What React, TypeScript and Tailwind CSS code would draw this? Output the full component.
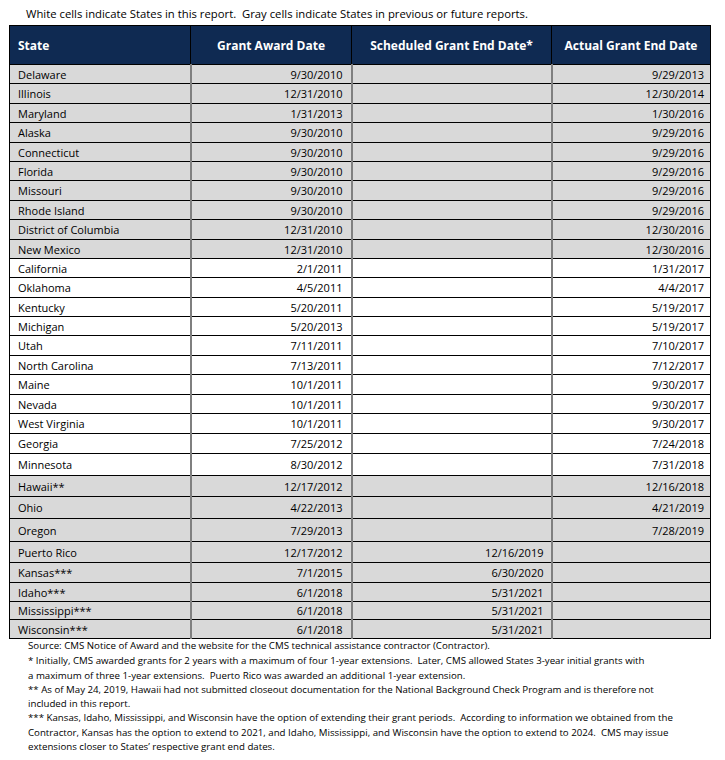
const rows: { state: string; award: string; scheduled: string; actual: string; gray: boolean; h: string }[] = [
  { state: 'Delaware', award: '9/30/2010', scheduled: '', actual: '9/29/2013', gray: true, h: 'h-[19px]' },
  { state: 'Illinois', award: '12/31/2010', scheduled: '', actual: '12/30/2014', gray: true, h: 'h-[20px]' },
  { state: 'Maryland', award: '1/31/2013', scheduled: '', actual: '1/30/2016', gray: true, h: 'h-[19px]' },
  { state: 'Alaska', award: '9/30/2010', scheduled: '', actual: '9/29/2016', gray: true, h: 'h-[20px]' },
  { state: 'Connecticut', award: '9/30/2010', scheduled: '', actual: '9/29/2016', gray: true, h: 'h-[19px]' },
  { state: 'Florida', award: '9/30/2010', scheduled: '', actual: '9/29/2016', gray: true, h: 'h-[19px]' },
  { state: 'Missouri', award: '9/30/2010', scheduled: '', actual: '9/29/2016', gray: true, h: 'h-[20px]' },
  { state: 'Rhode Island', award: '9/30/2010', scheduled: '', actual: '9/29/2016', gray: true, h: 'h-[19px]' },
  { state: 'District of Columbia', award: '12/31/2010', scheduled: '', actual: '12/30/2016', gray: true, h: 'h-[20px]' },
  { state: 'New Mexico', award: '12/31/2010', scheduled: '', actual: '12/30/2016', gray: true, h: 'h-[19px]' },
  { state: 'California', award: '2/1/2011', scheduled: '', actual: '1/31/2017', gray: false, h: 'h-[19px]' },
  { state: 'Oklahoma', award: '4/5/2011', scheduled: '', actual: '4/4/2017', gray: false, h: 'h-[20px]' },
  { state: 'Kentucky', award: '5/20/2011', scheduled: '', actual: '5/19/2017', gray: false, h: 'h-[19px]' },
  { state: 'Michigan', award: '5/20/2013', scheduled: '', actual: '5/19/2017', gray: false, h: 'h-[19px]' },
  { state: 'Utah', award: '7/11/2011', scheduled: '', actual: '7/10/2017', gray: false, h: 'h-[20px]' },
  { state: 'North Carolina', award: '7/13/2011', scheduled: '', actual: '7/12/2017', gray: false, h: 'h-[19px]' },
  { state: 'Maine', award: '10/1/2011', scheduled: '', actual: '9/30/2017', gray: false, h: 'h-[20px]' },
  { state: 'Nevada', award: '10/1/2011', scheduled: '', actual: '9/30/2017', gray: false, h: 'h-[19px]' },
  { state: 'West Virginia', award: '10/1/2011', scheduled: '', actual: '9/30/2017', gray: false, h: 'h-[20px]' },
  { state: 'Georgia', award: '7/25/2012', scheduled: '', actual: '7/24/2018', gray: false, h: 'h-[20px]' },
  { state: 'Minnesota', award: '8/30/2012', scheduled: '', actual: '7/31/2018', gray: false, h: 'h-[22px]' },
  { state: 'Hawaii**', award: '12/17/2012', scheduled: '', actual: '12/16/2018', gray: true, h: 'h-[21px]' },
  { state: 'Ohio', award: '4/22/2013', scheduled: '', actual: '4/21/2019', gray: true, h: 'h-[22px]' },
  { state: 'Oregon', award: '7/29/2013', scheduled: '', actual: '7/28/2019', gray: true, h: 'h-[23px]' },
  { state: 'Puerto Rico', award: '12/17/2012', scheduled: '12/16/2019', actual: '', gray: true, h: 'h-[21px]' },
  { state: 'Kansas***', award: '7/1/2015', scheduled: '6/30/2020', actual: '', gray: true, h: 'h-[20px]' },
  { state: 'Idaho***', award: '6/1/2018', scheduled: '5/31/2021', actual: '', gray: true, h: 'h-[19px]' },
  { state: 'Mississippi***', award: '6/1/2018', scheduled: '5/31/2021', actual: '', gray: true, h: 'h-[18px]' },
  { state: 'Wisconsin***', award: '6/1/2018', scheduled: '5/31/2021', actual: '', gray: true, h: 'h-[19px]' },
]

export default function App() {
  return (
    <div className="w-[725px] h-[760px] bg-white text-black pl-[9px] pt-[3px]" style={{ fontFamily: '"Open Sans", sans-serif' }}>
      {/* Caption */}
      <p className="pl-[17px] text-[11.3px] leading-[22px] h-[22px]">
        White cells indicate States in this report.&nbsp; Gray cells indicate States in previous or future reports.
      </p>

      {/* Table */}
      <table className="border-collapse table-fixed w-[701px] text-[11px] leading-[15px]">
        <colgroup>
          <col className="w-[181px]" />
          <col className="w-[161px]" />
          <col className="w-[200px]" />
          <col className="w-[159px]" />
        </colgroup>
        <thead>
          <tr className="bg-[#0f2a52] text-white text-[12px] font-bold">
            <th className="h-[39px] border border-black text-left pl-[8px]">State</th>
            <th className="h-[39px] border border-black text-center">Grant Award Date</th>
            <th className="h-[39px] border border-black text-center">Scheduled Grant End Date*</th>
            <th className="h-[39px] border border-black text-center">Actual Grant End Date</th>
          </tr>
        </thead>
        <tbody>
          {rows.map((r) => (
            <tr key={r.state} className={r.gray ? 'bg-[#d9d9d9]' : 'bg-white'}>
              <td className={`${r.h} p-0 pl-[8px] border-y border-black border-l border-l-black border-r-2 border-r-[#7f7f7f]`}>{r.state}</td>
              <td className={`${r.h} p-0 pr-[8px] text-right border-y border-black border-r-2 border-r-[#7f7f7f]`}>{r.award}</td>
              <td className={`${r.h} p-0 pr-[7px] text-right border-y border-black border-r-2 border-r-[#7f7f7f]`}>{r.scheduled}</td>
              <td className={`${r.h} p-0 pr-[6px] text-right border-y border-black border-r border-r-black`}>{r.actual}</td>
            </tr>
          ))}
        </tbody>
      </table>

      {/* Footnotes */}
      <div className="pl-[19px] text-[9.7px] leading-[14.3px]">
        <p>Source: CMS Notice of Award and the website for the CMS technical assistance contractor (Contractor).</p>
        <p className="mt-[1px]">
          * Initially, CMS awarded grants for 2 years with a maximum of four 1-year extensions.&nbsp; Later, CMS allowed States 3-year initial grants with
          <br />
          a maximum of three 1-year extensions.&nbsp; Puerto Rico was awarded an additional 1-year extension.
        </p>
        <p>
          ** As of May 24, 2019, Hawaii had not submitted closeout documentation for the National Background Check Program and is therefore not
          <br />
          included in this report.
        </p>
        <p>
          *** Kansas, Idaho, Mississippi, and Wisconsin have the option of extending their grant periods.&nbsp; According to information we obtained from the
          <br />
          Contractor, Kansas has the option to extend to 2021, and Idaho, Mississippi, and Wisconsin have the option to extend to 2024.&nbsp; CMS may issue
          <br />
          extensions closer to States&rsquo; respective grant end dates.
        </p>
      </div>
    </div>
  )
}
